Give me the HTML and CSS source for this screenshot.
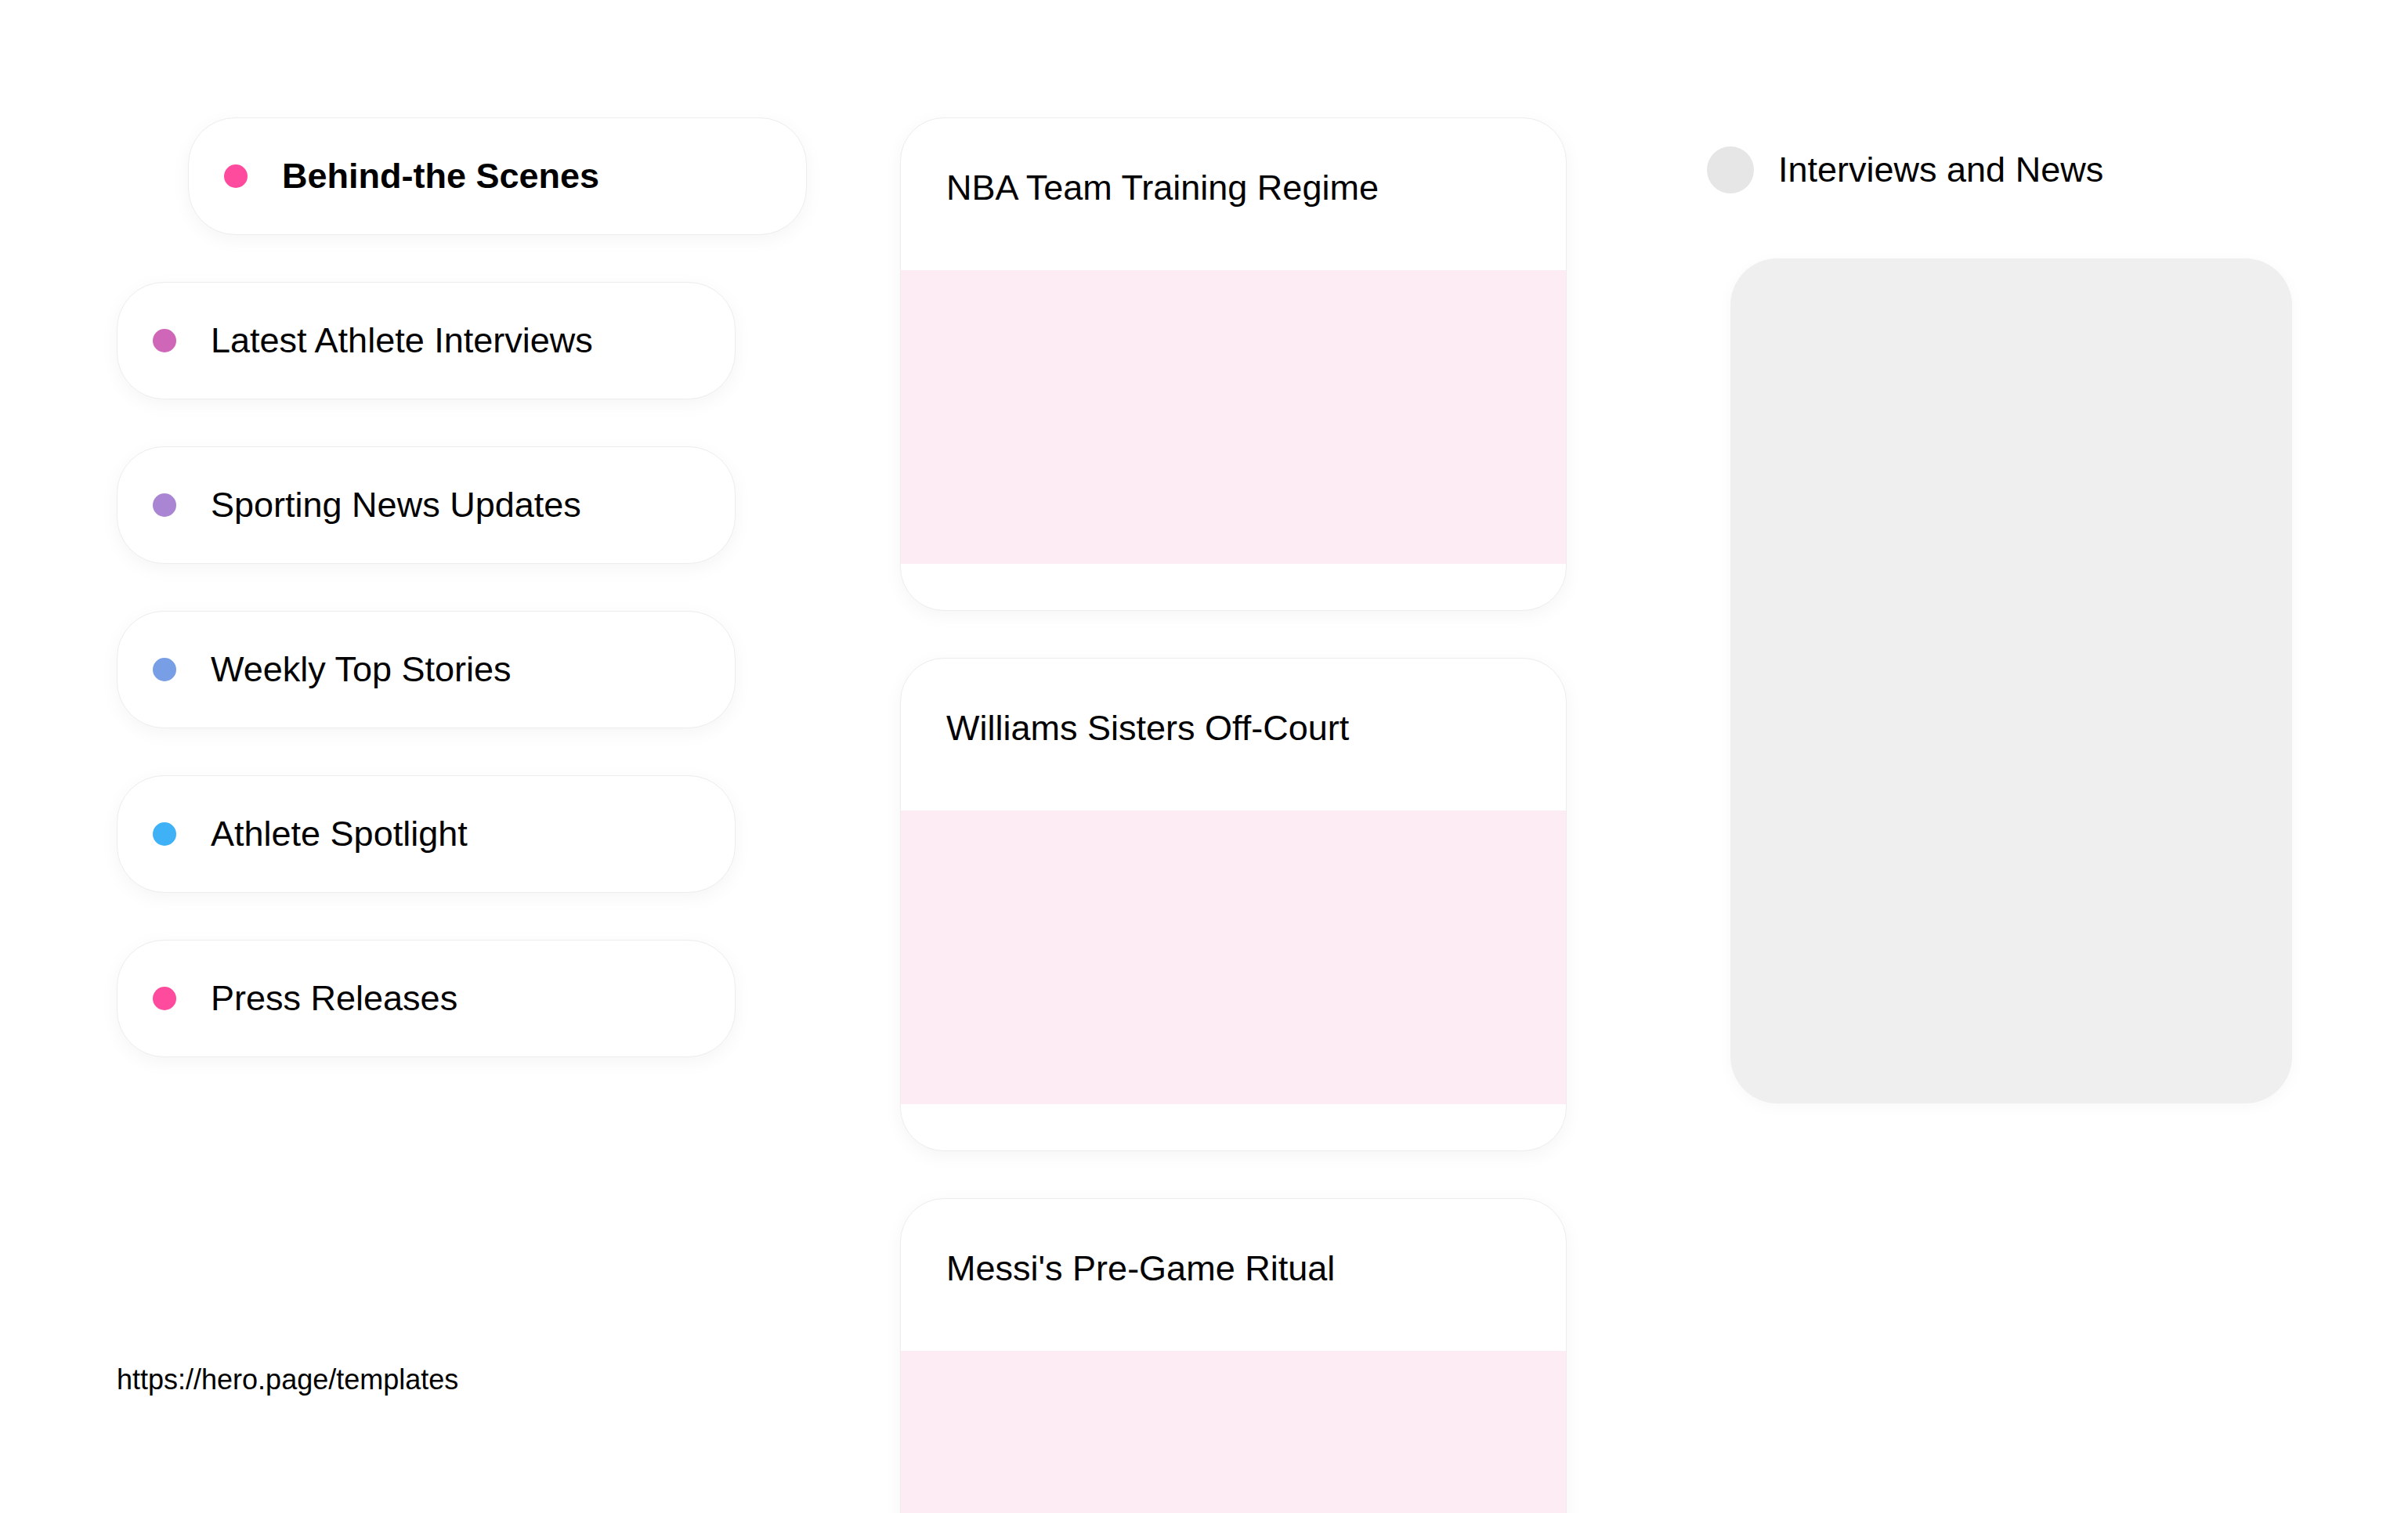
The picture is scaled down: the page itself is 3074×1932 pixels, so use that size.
FILE: index.html
```html
<!DOCTYPE html>
<html lang="en">
<head>
<meta charset="utf-8">
<title>Interviews and News</title>
<link rel="stylesheet" href="styles.css">
</head>
<body>
<div class="page">
  <aside class="sidebar">
    <ul class="topics">
      <li class="topic active"><span class="dot dot-pink"></span><span class="topic-label">Behind-the Scenes</span></li>
      <li class="topic"><span class="dot dot-orchid"></span><span class="topic-label">Latest Athlete Interviews</span></li>
      <li class="topic"><span class="dot dot-lavender"></span><span class="topic-label">Sporting News Updates</span></li>
      <li class="topic"><span class="dot dot-blue"></span><span class="topic-label">Weekly Top Stories</span></li>
      <li class="topic"><span class="dot dot-sky"></span><span class="topic-label">Athlete Spotlight</span></li>
      <li class="topic"><span class="dot dot-pink"></span><span class="topic-label">Press Releases</span></li>
    </ul>
    <a class="footer-link" href="#">https://hero.page/templates</a>
  </aside>

  <main class="feed">
    <article class="card">
      <div class="card-head"><h3 class="card-title">NBA Team Training Regime</h3></div>
      <div class="card-media"></div>
    </article>
    <article class="card">
      <div class="card-head"><h3 class="card-title">Williams Sisters Off-Court</h3></div>
      <div class="card-media"></div>
    </article>
    <article class="card">
      <div class="card-head"><h3 class="card-title">Messi's Pre-Game Ritual</h3></div>
      <div class="card-media"></div>
    </article>
  </main>

  <section class="detail">
    <div class="detail-head"><span class="detail-dot"></span><span class="detail-title">Interviews and News</span></div>
    <div class="detail-panel"></div>
  </section>
</div>
</body>
</html>
```

FILE: styles.css
```css
html, body {
  margin: 0;
  padding: 0;
  height: 100%;
  overflow: hidden;
  background: #ffffff;
}

body {
  font-family: "Liberation Sans", Arial, Helvetica, sans-serif;
  color: #000000;
}

.page {
  display: flex;
  align-items: flex-start;
  box-sizing: border-box;
  height: 100vh;
  padding: 150px 0 0 149px;
}

/* Left column */
.sidebar {
  flex-shrink: 0;
  width: 795px;
  height: 1632px;
  display: flex;
  flex-direction: column;
}

.topics {
  list-style: none;
  margin: 0;
  padding: 0;
  display: flex;
  flex-direction: column;
  gap: 60px;
}

.topic {
  box-sizing: border-box;
  height: 150px;
  width: 790px;
  display: flex;
  align-items: center;
  gap: 44px;
  padding-left: 45px;
  background: #ffffff;
  border: 1px solid #ededed;
  border-radius: 60px;
  box-shadow: 0 6px 24px rgba(0, 0, 0, 0.045);
  font-size: 45px;
}

.topic.active {
  margin-left: 91px;
  font-weight: 700;
}

.dot {
  flex-shrink: 0;
  width: 30px;
  height: 30px;
  border-radius: 50%;
}

.dot-pink { background: #ff4b9e; }
.dot-orchid { background: #d066b8; }
.dot-lavender { background: #a985d3; }
.dot-blue { background: #789ee6; }
.dot-sky { background: #3eb1f7; }

.footer-link {
  margin-top: auto;
  font-size: 36px;
  line-height: 41px;
  color: #000000;
  text-decoration: none;
}

/* Middle column */
.feed {
  flex-shrink: 0;
  width: 851px;
  margin-left: 205px;
  display: flex;
  flex-direction: column;
  gap: 60px;
}

.card {
  box-sizing: border-box;
  height: 630px;
  flex-shrink: 0;
  display: flex;
  flex-direction: column;
  overflow: hidden;
  background: #ffffff;
  border: 1px solid #ededed;
  border-radius: 56px;
  box-shadow: 0 6px 24px rgba(0, 0, 0, 0.045);
}

.card-head {
  box-sizing: border-box;
  height: 194px;
  flex-shrink: 0;
  padding: 63px 58px 0;
}

.card-title {
  margin: 0;
  font-size: 45px;
  font-weight: 400;
  line-height: normal;
}

.card-media {
  height: 375px;
  flex-shrink: 0;
  background: #fdecf4;
}

/* Right column */
.detail {
  flex-shrink: 0;
  width: 751px;
  margin-left: 179px;
  padding-top: 37px;
}

.detail-head {
  display: flex;
  align-items: center;
  gap: 31px;
  height: 60px;
  font-size: 45px;
}

.detail-dot {
  flex-shrink: 0;
  width: 60px;
  height: 60px;
  border-radius: 50%;
  background: #e6e6e6;
}

.detail-panel {
  width: 717px;
  height: 1079px;
  margin: 83px 0 0 30px;
  border-radius: 60px;
  background: #efefef;
  box-shadow: 0 4px 20px rgba(0, 0, 0, 0.03);
}
```
